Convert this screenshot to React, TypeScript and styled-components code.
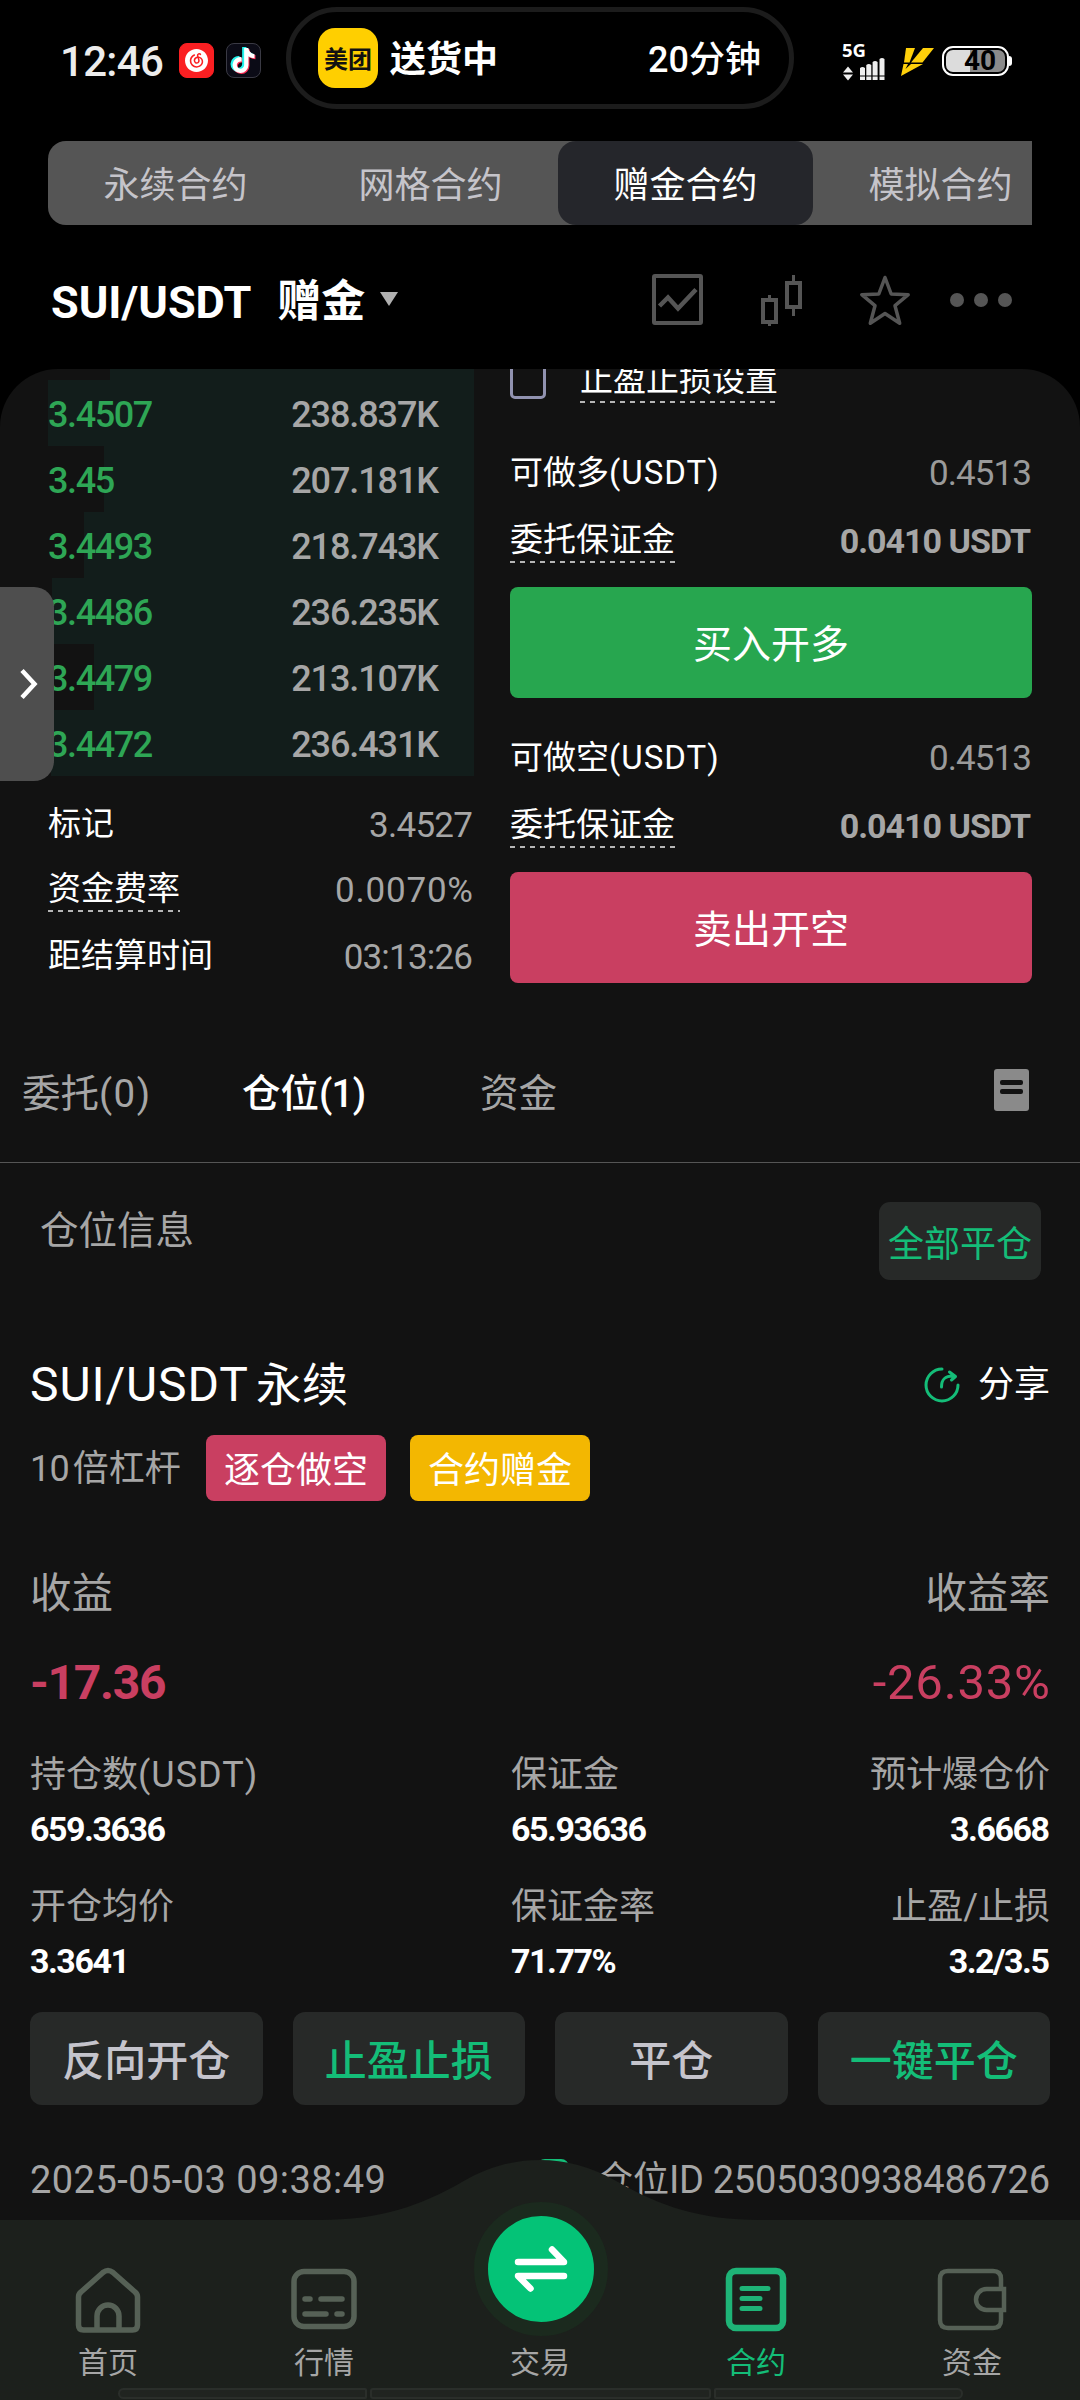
import React from 'react';
import styled, { createGlobalStyle } from 'styled-components';
import { FaTiktok } from 'react-icons/fa6';
import { SiNeteasecloudmusic } from 'react-icons/si';

const GREEN = '#14bd78';
const PINK = '#c93f61';
const GREY = '#a6a6a6';

const GlobalStyle = createGlobalStyle`
  *, *::before, *::after { box-sizing: border-box; }
  body { margin: 0; background: #000; }
`;

const Screen = styled.div`
  position: relative;
  width: 1080px;
  height: 2400px;
  overflow: hidden;
  display: flex;
  flex-direction: column;
  background: #000;
  color: #fff;
  font-family: Roboto, 'Noto Sans CJK SC', sans-serif;
  white-space: nowrap;
`;

const Text = styled.span<{ $size: number; $color?: string; $weight?: number; $ls?: number; $ml?: number }>`
  font-size: ${p => p.$size}px;
  line-height: 1;
  color: ${p => p.$color ?? '#fff'};
  font-weight: ${p => p.$weight ?? 400};
  letter-spacing: ${p => p.$ls ?? 0}px;
  margin-left: ${p => p.$ml ?? 0}px;
  margin-right: ${p => -(p.$ls ?? 0)}px;
`;

/* Latin run inside a Chinese label */
const Latin = styled.span`
  letter-spacing: 1px;
`;

/* ---------- status bar ---------- */
const StatusBar = styled.header`
  display: flex;
  align-items: flex-start;
  height: 141px;
  padding-left: 60px;
`;
const Clock = styled.div`
  width: 119px;
  padding-top: 41px;
  font-size: 42px;
  line-height: 42px;
  font-weight: 500;
  letter-spacing: -0.7px;
  color: #ececec;
`;
const AppBadge = styled.div<{ $bg: string; $line: string }>`
  display: flex;
  align-items: center;
  justify-content: center;
  width: 35px;
  height: 35px;
  margin: 43px 12px 0 0;
  border-radius: 8px;
  background: ${p => p.$bg};
  border: 1px solid ${p => p.$line};
`;
const Island = styled.div`
  display: flex;
  align-items: center;
  width: 508px;
  height: 102px;
  margin: 7px 0 0 13px;
  padding: 0 28px 0 27px;
  border: 5px solid #1c1c1c;
  border-radius: 51px;
  font-size: 36px;
  font-weight: 700;
`;
const IslandLogo = styled.div`
  display: flex;
  align-items: center;
  justify-content: center;
  width: 60px;
  height: 60px;
  margin-right: 12px;
  border-radius: 17px;
  background: #ffcf00;
  color: #111;
  font-size: 24px;
  padding-bottom: 2px;
`;
const IslandText = styled.span<{ $end?: boolean }>`
  margin-left: ${p => (p.$end ? 'auto' : '0')};
  padding-bottom: 4px;
  font-weight: ${p => (p.$end ? 500 : 700)};
`;
const Net = styled.div`
  display: flex;
  flex-direction: column;
  width: 50px;
  margin: 43px 9px 0 48px;
  font-family: 'Open Sans', sans-serif;
  font-size: 18.5px;
  line-height: 14px;
  font-weight: 700;
  svg { margin-left: 1px; }
`;
const Bolt = styled.svg`
  margin-top: 48px;
`;
const Battery = styled.div`
  position: relative;
  width: 67px;
  height: 30px;
  margin: 46px 0 0 8px;
  padding: 2px;
  border: 2px solid #fff;
  border-radius: 11px;
  &::after {
    content: '';
    position: absolute;
    right: -5px;
    top: 8px;
    width: 3px;
    height: 10px;
    border-radius: 0 3px 3px 0;
    background: #fff;
  }
`;
const Charge = styled.div`
  height: 22px;
  border-radius: 7px;
  background: linear-gradient(90deg, #dcdcdc 40%, #8b8b8b 40%);
  color: #000;
  font-size: 28px;
  line-height: 22px;
  font-weight: 700;
  padding-left: 18px;
`;

/* ---------- contract tabs ---------- */
const ContractTabs = styled.nav`
  display: flex;
  width: 984px;
  height: 84px;
  margin-left: 48px;
  overflow: hidden;
  background: #555;
  border-radius: 18px 0 0 18px;
`;
const ContractTab = styled.div<{ $on?: boolean }>`
  flex: none;
  display: flex;
  align-items: center;
  justify-content: center;
  width: 255px;
  padding-bottom: 3px;
  border-radius: 18px;
  background: ${p => (p.$on ? '#25262b' : 'transparent')};
  color: ${p => (p.$on ? '#fff' : '#c5c4ca')};
  font-size: 36px;
`;

const PairBar = styled.div`
  display: flex;
  align-items: center;
  height: 144px;
  padding: 10px 67px 0 51px;
`;
const Caret = styled.i`
  margin: -6px 0 0 15px;
  border: 9px solid transparent;
  border-top: 14px solid #b0b0b0;
  border-bottom: 0;
`;
const PairTools = styled.div`
  display: flex;
  align-items: center;
  margin: 0 1px 6px auto;
  svg { display: block; }
`;

/* ---------- main panel ---------- */
const Panel = styled.main`
  flex: none;
  height: 2031px;
  overflow: hidden;
  background: #121212;
  border-radius: 58px 58px 0 0;
`;
const Trade = styled.section`
  display: flex;
  gap: 36px;
  height: 655px;
  padding: 0 48px;
`;
const Book = styled.div`
  width: 426px;
`;
const BookRow = styled.div<{ $from: number; $h?: number }>`
  display: flex;
  align-items: center;
  justify-content: space-between;
  height: ${p => p.$h ?? 66}px;
  padding: 4px 35px 0 0;
  background: linear-gradient(90deg, transparent ${p => p.$from}px, #121d1b ${p => p.$from}px);
`;
const Facts = styled.div`
  margin-top: 15px;
`;
const Row = styled.div<{ $h: number; $down?: number; $end?: number }>`
  display: flex;
  align-items: center;
  justify-content: space-between;
  height: ${p => p.$h}px;
  padding: ${p => p.$down ?? 0}px ${p => p.$end ?? 0}px 0 0;
`;
const Label = styled.span<{ $dotted?: boolean }>`
  font-size: 33px;
  line-height: 42px;
  height: 44px;
  background: ${p =>
    p.$dotted
      ? 'repeating-linear-gradient(90deg, #b5b5b5 0 5px, transparent 5px 10px) 0 100% / 100% 2px no-repeat'
      : 'none'};
`;
const Order = styled.div`
  width: 522px;
`;
const CheckRow = styled.div`
  display: flex;
  align-items: center;
  height: 36px;
  margin: -6px 0 43px;
`;
const Checkbox = styled.span`
  width: 36px;
  height: 36px;
  margin-right: 34px;
  border: 3px solid #9192b0;
  border-radius: 5px;
`;
const OrderButton = styled.button<{ $bg: string }>`
  display: flex;
  align-items: center;
  justify-content: center;
  width: 522px;
  height: 111px;
  margin: 7px 0 29px;
  padding: 0 0 4px;
  border: 0;
  border-radius: 8px;
  background: ${p => p.$bg};
  color: #fff;
  font-family: inherit;
  font-size: 39px;
`;

const SectionTabs = styled.div`
  display: flex;
  align-items: center;
  height: 139px;
  padding: 0 51px 0 22px;
  border-bottom: 1px solid #555;
`;
const SectionTab = styled.div<{ $w: number; $on?: boolean; $ls?: number }>`
  width: ${p => p.$w}px;
  padding-bottom: 6px;
  font-size: 38.5px;
  font-weight: ${p => (p.$on ? 500 : 400)};
  color: ${p => (p.$on ? '#fff' : GREY)};
  span { letter-spacing: ${p => p.$ls ?? 0}px; }
`;
const ListIcon = styled.div`
  display: flex;
  flex-direction: column;
  gap: 4px;
  width: 35px;
  height: 42px;
  margin: -6px 0 0 auto;
  padding: 11px 6px;
  border-radius: 3px;
  background: #8a8a8a;
  i { height: 5px; border-radius: 2px; background: #121212; }
`;

const Positions = styled.section`
  padding: 39px 30px 0;
`;
const PosHead = styled.div`
  display: flex;
  justify-content: space-between;
  align-items: flex-start;
  height: 78px;
  padding: 0 9px 0 10px;
`;
const PosCaption = styled.div`
  display: flex;
  align-items: center;
  height: 58px;
`;
const CloseAll = styled.button`
  display: flex;
  align-items: center;
  justify-content: center;
  width: 162px;
  height: 78px;
  padding: 0 0 1px;
  border: 0;
  border-radius: 11px;
  background: #272928;
  color: ${GREEN};
  font-family: inherit;
  font-size: 36px;
`;
const Line = styled.div<{ $h: number; $mt: number; $down?: number }>`
  display: flex;
  align-items: center;
  height: ${p => p.$h}px;
  margin-top: ${p => p.$mt}px;
  padding-top: ${p => p.$down ?? 0}px;
`;
const Push = styled.div`
  display: flex;
  align-items: center;
  margin-left: auto;
`;
const Leverage = styled.div`
  display: flex;
  width: 150px;
  padding-top: 2px;
`;
const Tag = styled.span<{ $bg: string; $ml: number }>`
  display: flex;
  align-items: center;
  justify-content: center;
  width: 180px;
  height: 66px;
  margin-left: ${p => p.$ml}px;
  padding-bottom: 2px;
  border-radius: 8px;
  background: ${p => p.$bg};
  font-size: 36px;
`;
const Metrics = styled.dl`
  display: grid;
  grid-template-columns: 481px 1fr auto;
  row-gap: 34px;
  margin: 40px 0 30px;
`;
const Metric = styled.div<{ $end?: boolean }>`
  display: flex;
  flex-direction: column;
  align-items: ${p => (p.$end ? 'flex-end' : 'flex-start')};
  dt {
    height: 46px;
    line-height: 46px;
    font-size: 36px;
    color: ${GREY};
  }
  dd {
    height: 40px;
    line-height: 40px;
    margin: 11px 0 1px;
    padding-right: ${p => (p.$end ? 1.5 : 0)}px;
    font-size: 34px;
    font-weight: 700;
    letter-spacing: -1.5px;
  }
`;
const Actions = styled.div`
  display: grid;
  grid-template-columns: repeat(4, 1fr);
  gap: 30px;
`;
const Action = styled.button<{ $green?: boolean }>`
  display: flex;
  align-items: center;
  justify-content: center;
  height: 93px;
  padding: 0 0 2px;
  border: 0;
  border-radius: 12px;
  background: #272928;
  color: ${p => (p.$green ? GREEN : '#c5c4cc')};
  font-family: inherit;
  font-size: 42px;
  font-weight: 500;
`;
const CopyIcon = styled.span`
  width: 32px;
  height: 36px;
  margin: -6px 28px 0 0;
  border: 4px solid ${GREEN};
  border-radius: 8px;
`;

/* ---------- overlays ---------- */
const Drawer = styled.div`
  position: absolute;
  left: 0;
  top: 587px;
  display: flex;
  align-items: center;
  width: 54px;
  height: 194px;
  padding-left: 19px;
  border-radius: 0 20px 20px 0;
  background: #4e4e4e;
`;
const NavBar = styled.nav`
  position: absolute;
  left: 0;
  bottom: 0;
  width: 1080px;
  height: 241px;
`;
const Hump = styled.svg`
  position: absolute;
  inset: 0;
`;
const NavItems = styled.div`
  position: relative;
  display: grid;
  grid-template-columns: repeat(5, 1fr);
  height: 229px;
`;
const NavItem = styled.div<{ $on?: boolean }>`
  display: flex;
  flex-direction: column;
  align-items: center;
  justify-content: flex-end;
  gap: 8px;
  padding-bottom: 5px;
  font-size: 30px;
  line-height: 40px;
  color: ${p => (p.$on ? GREEN : GREY)};
  svg { display: block; }
`;
const TradeCircle = styled.div`
  display: flex;
  align-items: center;
  justify-content: center;
  width: 134px;
  height: 134px;
  margin: 0 0 -1px 2px;
  border: 14px solid #1b2a1e;
  border-radius: 50%;
  background: #04c377;
`;
const GestureBar = styled.div`
  position: relative;
  display: flex;
  gap: 3px;
  height: 12px;
  padding-left: 118px;
`;
const GesturePart = styled.i<{ $w: number; $r: string }>`
  width: ${p => p.$w}px;
  height: 11px;
  border: 2px solid #2a2e2a;
  border-radius: ${p => p.$r};
  background: #202420;
`;

const bids: [string, string, number][] = [
  ['3.4507', '238.837K', 0],
  ['3.45', '207.181K', 56],
  ['3.4493', '218.743K', 36],
  ['3.4486', '236.235K', 4],
  ['3.4479', '213.107K', 46],
  ['3.4472', '236.431K', 3],
];

const facts: [string, string, boolean, number][] = [
  ['标记', '3.4527', false, -0.7],
  ['资金费率', '0.0070%', true, 0.8],
  ['距结算时间', '03:13:26', false, -0.8],
];

const metrics: [string, string, string][] = [
  ['持仓数', '(USDT)', '659.3636'],
  ['保证金', '', '65.93636'],
  ['预计爆仓价', '', '3.6668'],
  ['开仓均价', '', '3.3641'],
  ['保证金率', '', '71.77%'],
  ['止盈/止损', '', '3.2/3.5'],
];

function OrderSide({ label, action, color }: { label: string; action: string; color: string }) {
  return (
    <>
      <Row $h={60} $down={3}>
        <Label>{label}<Latin>(USDT)</Latin></Label>
        <Text $size={35} $color="#9a9a9a" $ls={-0.9}>0.4513</Text>
      </Row>
      <Row $h={78} $end={1}>
        <Label $dotted>委托保证金</Label>
        <Text $size={34} $color={GREY} $weight={700} $ls={-1}>0.0410 USDT</Text>
      </Row>
      <OrderButton $bg={color}>{action}</OrderButton>
    </>
  );
}

const NAV = '#566156';

export default function App() {
  return (
    <Screen>
      <GlobalStyle />
      <StatusBar>
        <Clock>12:46</Clock>
        <AppBadge $bg="#fa1f22" $line="#fa1f22"><SiNeteasecloudmusic size={23} color="#fff" /></AppBadge>
        <AppBadge $bg="#0b0b16" $line="#3a3a44">
          <FaTiktok size={25} color="#fff" style={{ filter: 'drop-shadow(-1.5px -1px 0 #25f4ee) drop-shadow(1.5px 1px 0 #fe2c55)' }} />
        </AppBadge>
        <Island>
          <IslandLogo>美团</IslandLogo>
          <IslandText>送货中</IslandText>
          <IslandText $end>20分钟</IslandText>
        </Island>
        <Net>
          5G
          <svg width="44" height="24" viewBox="0 0 44 24" fill="#eee">
            <path d="M0 15.500L5 9.500 10 15.500ZM0 17.500h10L5 23.500Z" />
            <path d="M17 11q2.500-2 5 0v7.500h-5zM23.300 8q2.500-2 5 0v10.500h-5zM29.600 5q2.500-2 5 0v13.500h-5zM36.500 2q2.500-2 5 0v16.500h-5zM17 19.500h5v3.500h-5zM23.300 19.500h5v3.500h-5zM29.600 19.500h5v3.500h-5zM36.500 19.500h5v3.500h-5z" />
          </svg>
        </Net>
        <Bolt width="33" height="28" viewBox="0 0 33 28" fill="#ffd00a">
          <path d="M5 0H14L8.500 14.500H3Z" />
          <path d="M22 0H33L21.500 14.500H10Z" />
          <path d="M2.500 16H7L4.500 21 10 16H22L0 28Z" />
        </Bolt>
        <Battery><Charge>40</Charge></Battery>
      </StatusBar>

      <ContractTabs>
        <ContractTab>永续合约</ContractTab>
        <ContractTab>网格合约</ContractTab>
        <ContractTab $on>赠金合约</ContractTab>
        <ContractTab>模拟合约</ContractTab>
      </ContractTabs>

      <PairBar>
        <Text $size={45} $weight={700}>SUI/USDT</Text>
        <Text $size={44} $weight={700} $ml={26}>赠金</Text>
        <Caret />
        <PairTools>
          <svg width="360" height="54" viewBox="0 0 360 54" fill="none" stroke="#555" strokeWidth="4">
            <rect x="2" y="4" width="47" height="47" rx="1" />
            <path d="M7.500 34L16 25.500 26 36.500 44 17.500" strokeWidth="4.500" />
            <path d="M111 28h13v22h-13zM135 11h13v24h-13z" />
            <path d="M117.500 28v-5M117.500 50v4M141.500 11V3M141.500 35v9" strokeWidth="3" />
            <path d="M233 5.500l6.200 16.500 17 .7-13.200 11 4.700 17.500L233 41.500l-14.700 9.700 4.700-17.500-13.200-11 17-.7z" strokeWidth="3.500" strokeLinejoin="round" />
            <g fill="#555" stroke="none"><circle cx="305" cy="28" r="7" /><circle cx="329" cy="28" r="7" /><circle cx="353" cy="28" r="7" /></g>
          </svg>
        </PairTools>
      </PairBar>

      <Panel>
        <Trade>
          <Book>
            <BookRow $from={62} $h={11} />
            {bids.map(([price, amount, from]) => (
              <BookRow key={price} $from={from}>
                <Text $size={36} $color="#2ea655" $weight={500} $ls={-1.4}>{price}</Text>
                <Text $size={36} $color={GREY} $weight={500} $ls={-1.1}>{amount}</Text>
              </BookRow>
            ))}
            <Facts>
              {facts.map(([k, v, dotted, ls]) => (
                <Row key={k} $h={66} $down={dotted ? 0 : 2} $end={1}>
                  <Label $dotted={dotted}>{k}</Label>
                  <Text $size={35} $color={GREY} $ls={ls}>{v}</Text>
                </Row>
              ))}
            </Facts>
          </Book>
          <Order>
            <CheckRow>
              <Checkbox />
              <Label $dotted>止盈止损设置</Label>
            </CheckRow>
            <OrderSide label="可做多" action="买入开多" color="#27a64f" />
            <OrderSide label="可做空" action="卖出开空" color={PINK} />
          </Order>
        </Trade>

        <SectionTabs>
          <SectionTab $w={220} $ls={1.4}>委托<span>(0)</span></SectionTab>
          <SectionTab $w={238} $on $ls={-0.8}>仓位<span>(1)</span></SectionTab>
          <SectionTab $w={90}>资金</SectionTab>
          <ListIcon><i /><i /></ListIcon>
        </SectionTabs>

        <Positions>
          <PosHead>
            <PosCaption><Text $size={38.5} $color={GREY}>仓位信息</Text></PosCaption>
            <CloseAll>全部平仓</CloseAll>
          </PosHead>

          <Line $h={60} $mt={74} $down={1}>
            <Text $size={48} $ls={0.9}>SUI/USDT</Text>
            <Text $size={46} $ml={8}>永续</Text>
            <Push>
              <svg width="36" height="36" viewBox="0 0 36 36" fill="none" stroke={GREEN} strokeWidth="3" strokeLinecap="round" strokeLinejoin="round" style={{ marginRight: 18 }}>
                <path d="M18 2A16 16 0 1 0 34 18" />
                <path d="M17.500 20C17.500 12 21 9 29 9M25.500 5L31.500 9.500 27.500 13" />
              </svg>
              <Text $size={36}>分享</Text>
            </Push>
          </Line>

          <Line $h={66} $mt={21}>
            <Leverage>
              <Text $size={36} $color={GREY} $ls={-0.7}>10</Text>
              <Text $size={36} $color={GREY} $ml={3}>倍杠杆</Text>
            </Leverage>
            <Tag $bg={PINK} $ml={26}>逐仓做空</Tag>
            <Tag $bg="#f3b701" $ml={24}>合约赠金</Tag>
          </Line>

          <Line $h={60} $mt={61} $down={4}>
            <Text $size={41.5} $color={GREY}>收益</Text>
            <Push><Text $size={41.5} $color={GREY}>收益率</Text></Push>
          </Line>
          <Line $h={60} $mt={30} $down={1}>
            <Text $size={48} $color={PINK} $weight={700} $ls={-1.3}>-17.36</Text>
            <Push><Text $size={49} $color={PINK} $ls={0.8}>-26.33%</Text></Push>
          </Line>

          <Metrics>
            {metrics.map(([k, unit, v], i) => (
              <Metric key={k} $end={i % 3 === 2}>
                <dt>{k}{unit && <Latin>{unit}</Latin>}</dt>
                <dd>{v}</dd>
              </Metric>
            ))}
          </Metrics>

          <Actions>
            <Action>反向开仓</Action>
            <Action $green>止盈止损</Action>
            <Action>平仓</Action>
            <Action $green>一键平仓</Action>
          </Actions>

          <Line $h={60} $mt={44} $down={2}>
            <Text $size={38} $color={GREY} $ls={0.45}>2025-05-03 09:38:49</Text>
            <Push>
              <CopyIcon />
              <Text $size={36} $color={GREY}>仓位</Text>
              <Text $size={38} $color={GREY} $ls={-0.3}>ID 2505030938486726</Text>
            </Push>
          </Line>
        </Positions>
      </Panel>

      <Drawer>
        <svg width="20" height="32" viewBox="0 0 20 32" fill="none" stroke="#fff" strokeWidth="4.500">
          <path d="M3 2.500L15.500 16 3 29.500" />
        </svg>
      </Drawer>

      <NavBar>
        <Hump width="1080" height="241" viewBox="0 0 1080 241" fill="#1c201c">
          <path d="M0 61H320C380 61 420 47 462 23C490 7 515 1 540 1S590 7 618 23C660 47 700 61 760 61H1080V241H0Z" />
        </Hump>
        <NavItems>
          <NavItem>
            <svg width="66" height="68" viewBox="0 0 66 68" fill="none" stroke={NAV} strokeWidth="5.500">
              <path d="M3.500 30Q3.500 27 6 25L28 5.500Q33 1.500 38 5.500L60 25Q62.500 27 62.500 30V58Q62.500 63 57.500 63H8.500Q3.500 63 3.500 58Z" strokeLinejoin="round" />
              <path d="M22 62V49a11 11 0 0 1 22 0V62" />
            </svg>
            首页
          </NavItem>
          <NavItem>
            <svg width="68" height="68" viewBox="0 0 68 68" fill="none" stroke={NAV} strokeWidth="5.500" strokeLinecap="round">
              <rect x="4" y="4.500" width="60" height="55" rx="10" />
              <path d="M15 32H20M31 32H52M15 47H36M47 47H52" />
            </svg>
            行情
          </NavItem>
          <NavItem>
            <TradeCircle>
              <svg width="54" height="48" viewBox="0 0 54 48" fill="none" stroke="#fff" strokeWidth="6.500" strokeLinecap="round" strokeLinejoin="round">
                <path d="M4 17H50L38 4.500M50 31H4L16.500 43.500" />
              </svg>
            </TradeCircle>
            交易
          </NavItem>
          <NavItem $on>
            <svg width="62" height="68" viewBox="0 0 62 68" fill="none" stroke="#1eb477" strokeWidth="6.500" strokeLinecap="round">
              <rect x="4" y="4" width="54" height="57" rx="7" />
              <path d="M17 21.500H43M17 31.500H35M17 41.500H35" strokeWidth="5" />
            </svg>
            合约
          </NavItem>
          <NavItem>
            <svg width="70" height="68" viewBox="0 0 70 68" fill="none" stroke={NAV} strokeWidth="4.500">
              <path d="M64 21V12Q64 4 56 4H11Q3 4 3 12V53Q3 61 11 61H56Q64 61 64 53V44" />
              <path d="M67 22H49.500a10.500 10.500 0 0 0 0 21H67Z" />
            </svg>
            资金
          </NavItem>
        </NavItems>
        <GestureBar>
          <GesturePart $w={249} $r="6px 2px 2px 6px" />
          <GesturePart $w={341} $r="3px" />
          <GesturePart $w={249} $r="2px 6px 6px 2px" />
        </GestureBar>
      </NavBar>
    </Screen>
  );
}
